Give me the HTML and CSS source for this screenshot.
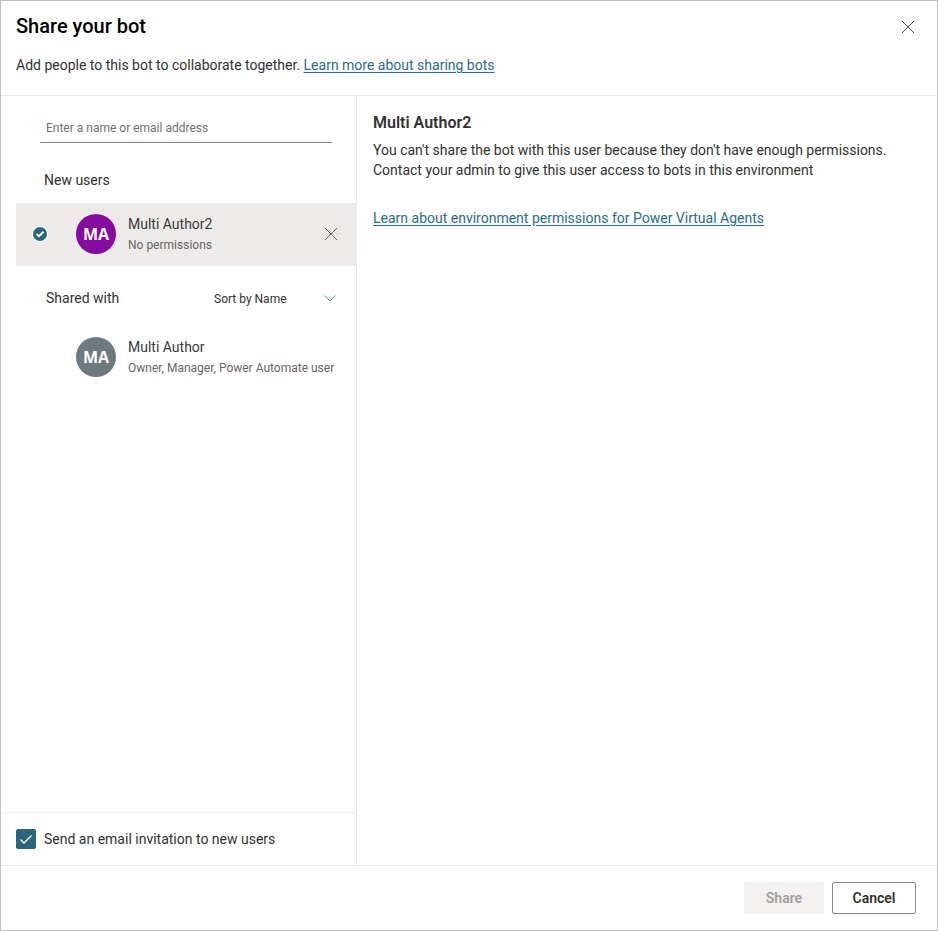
FILE: index.html
```html
<!DOCTYPE html>
<html lang="en">
<head>
<meta charset="utf-8">
<meta name="viewport" content="width=device-width, initial-scale=1">
<title>Share your bot</title>
<link rel="stylesheet" href="styles.css">
</head>
<body>
<main class="dialog" role="dialog" aria-labelledby="dialog-title">
  <header class="dialog-header">
    <div class="title-row">
      <h1 class="title" id="dialog-title">Share your bot</h1>
      <button class="icon-button" type="button" aria-label="Close">
        <svg class="icon-close" viewBox="0 0 12 12" aria-hidden="true"><path d="M0 0L12 12M12 0L0 12"/></svg>
      </button>
    </div>
    <p class="intro">Add people to this bot to collaborate together. <a href="#">Learn more about sharing bots</a></p>
  </header>

  <div class="dialog-body">
    <section class="people">
      <div class="search">
        <input class="search-input" type="text" placeholder="Enter a name or email address" aria-label="Enter a name or email address">
      </div>
      <h2 class="group-title">New users</h2>
      <div class="person person-selected">
        <svg class="selected-mark" viewBox="0 0 16 16" aria-hidden="true"><circle cx="8" cy="8" r="8" fill="#fff"/><circle cx="8" cy="8" r="7" fill="#2b667a"/><path d="M4.5 8L7 10.2L11.5 5.8"/></svg>
        <span class="avatar avatar-purple">MA</span>
        <div class="person-text">
          <div class="person-name">Multi Author2</div>
          <div class="person-role">No permissions</div>
        </div>
        <button class="icon-button remove" type="button" aria-label="Remove Multi Author2">
          <svg class="icon-close" viewBox="0 0 12 12" aria-hidden="true"><path d="M0 0L12 12M12 0L0 12"/></svg>
        </button>
      </div>
      <div class="shared-row">
        <h2 class="shared-title">Shared with</h2>
        <div class="sort">
          <select class="sort-select" aria-label="Sort order"><option>Sort by Name</option></select>
          <svg class="icon-chevron" viewBox="0 0 12 7" aria-hidden="true"><path d="M0.5 0.5L6 6L11.5 0.5"/></svg>
        </div>
      </div>
      <div class="person">
        <span class="avatar avatar-gray">MA</span>
        <div class="person-text">
          <div class="person-name">Multi Author</div>
          <div class="person-role">Owner, Manager, Power Automate user</div>
        </div>
      </div>
      <div class="invite">
        <input class="checkbox" type="checkbox" id="invite" checked>
        <svg class="icon-check" viewBox="0 0 20 20" aria-hidden="true"><path d="M4.5 10.5L8 14L15.5 6.5"/></svg>
        <label for="invite">Send an email invitation to new users</label>
      </div>
    </section>

    <section class="details">
      <h2 class="details-title">Multi Author2</h2>
      <p class="details-text">You can't share the bot with this user because they don't have enough permissions. Contact your admin to give this user access to bots in this environment</p>
      <p class="details-text"><a href="#">Learn about environment permissions for Power Virtual Agents</a></p>
    </section>
  </div>

  <footer class="dialog-footer">
    <button class="button button-share" type="button" disabled>Share</button>
    <button class="button button-cancel" type="button">Cancel</button>
  </footer>
</main>
</body>
</html>
```
FILE: styles.css
```css
* {
  box-sizing: border-box;
}

body {
  margin: 0;
  background: #fff;
  color: #323130;
  font: 14px/20px "Segoe UI", Roboto, "Open Sans", sans-serif;
}

h1, h2, p {
  margin: 0;
  font-weight: 400;
}

button, input, select {
  margin: 0;
  font: inherit;
}

a {
  color: #2b6c8a;
  text-underline-offset: 2px;
}

svg {
  fill: none;
  flex: none;
}

.dialog {
  display: flex;
  flex-direction: column;
  min-height: 100vh;
  border: 1px solid #c0c0c0;
}

.dialog-header {
  padding: 10px 13px 20px 15px;
  border-bottom: 1px solid #eaeaea;
}

.title-row {
  display: flex;
  align-items: flex-start;
  justify-content: space-between;
  margin-bottom: 12px;
}

.title {
  color: #000;
  font-size: 20px;
  line-height: 30px;
  font-weight: 500;
}

.icon-button {
  display: flex;
  align-items: center;
  justify-content: center;
  width: 32px;
  height: 32px;
  padding: 0;
  border: 0;
  background: none;
}

.icon-close {
  width: 12px;
  height: 12px;
  stroke: #484f66;
  overflow: visible;
}

.dialog-body {
  display: grid;
  grid-template-columns: 356px 1fr;
  flex: 1;
}

.people {
  display: flex;
  flex-direction: column;
  border-right: 1px solid #eaeaea;
}

.search {
  padding: 16px 24px 0 39px;
}

.search-input {
  width: 100%;
  height: 31px;
  padding: 2px 6px 0;
  border: 0;
  border-bottom: 1px solid #8a8886;
  border-radius: 1px;
  background: none;
  color: #323130;
  font-size: 12px;
}

.search-input::placeholder {
  color: #72706e;
}

.group-title {
  padding: 27px 43px 13px;
  font-size: 14px;
}

.person {
  display: grid;
  grid-template-columns: 48px 40px 1fr auto;
  align-items: center;
  column-gap: 12px;
  height: 63px;
  margin-left: 15px;
  padding-bottom: 1px;
}

.person-selected {
  background: #ecebe9;
}

.selected-mark {
  width: 16px;
  height: 16px;
  margin-left: 16px;
}

.selected-mark path {
  stroke: #fff;
  stroke-width: 2;
}

.avatar {
  grid-column: 2;
  width: 40px;
  height: 40px;
  border-radius: 50%;
  color: #fff;
  font-family: "Segoe UI", "Open Sans", sans-serif;
  font-size: 16px;
  line-height: 40px;
  font-weight: 700;
  text-align: center;
}

.avatar-purple {
  background: #850c9e;
}

.avatar-gray {
  background: #6e7a80;
}

.person-text {
  padding-top: 1px;
  white-space: nowrap;
}

.person-name {
  color: #3b3a39;
}

.person-role {
  padding-top: 1px;
  color: #686664;
  font-size: 12px;
}

.remove {
  margin-right: 9px;
}

.remove .icon-close {
  stroke: #605e5c;
}

.shared-row {
  display: flex;
  align-items: center;
  justify-content: space-between;
  height: 60px;
  padding: 4px 20px 0 45px;
}

.shared-title {
  font-size: 14px;
}

.sort {
  display: grid;
  grid-template-columns: 1fr;
  align-items: center;
  width: 122px;
}

.sort-select {
  grid-area: 1 / 1;
  width: 100%;
  height: 24px;
  padding: 2px 0 0;
  border: 0;
  background: none;
  color: #323130;
  font-size: 12px;
  appearance: none;
}

.icon-chevron {
  grid-area: 1 / 1;
  justify-self: end;
  width: 12px;
  height: 7px;
  stroke: #5b93b5;
  pointer-events: none;
}

.invite {
  display: grid;
  grid-template-columns: 20px 1fr;
  align-items: center;
  column-gap: 8px;
  height: 53px;
  margin-top: auto;
  padding-left: 15px;
  border-top: 1px solid #eaeaea;
}

.checkbox {
  grid-area: 1 / 1;
  width: 20px;
  height: 20px;
  border: 1px solid #2b667a;
  border-radius: 2px;
  appearance: none;
}

.checkbox:checked {
  background: #2b667a;
}

.icon-check {
  grid-area: 1 / 1;
  width: 20px;
  height: 20px;
  stroke: #fff;
  stroke-width: 1.3;
  pointer-events: none;
}

.details {
  padding: 16px;
}

.details-title {
  margin-bottom: 6px;
  font-size: 16px;
  line-height: 22px;
  font-weight: 600;
}

.details-text {
  max-width: 540px;
  margin-bottom: 28px;
}

.dialog-footer {
  display: flex;
  justify-content: flex-end;
  gap: 8px;
  padding: 16px 21px;
  border-top: 1px solid #eaeaea;
}

.button {
  min-width: 80px;
  height: 32px;
  padding: 0 16px;
  border: 1px solid #8a8886;
  border-radius: 2px;
  background: #fff;
  color: #323130;
  font-weight: 600;
}

.button-share {
  border-color: #f3f2f1;
  background: #f3f2f1;
  color: #a19f9d;
}

.button-cancel {
  min-width: 84px;
}
```
